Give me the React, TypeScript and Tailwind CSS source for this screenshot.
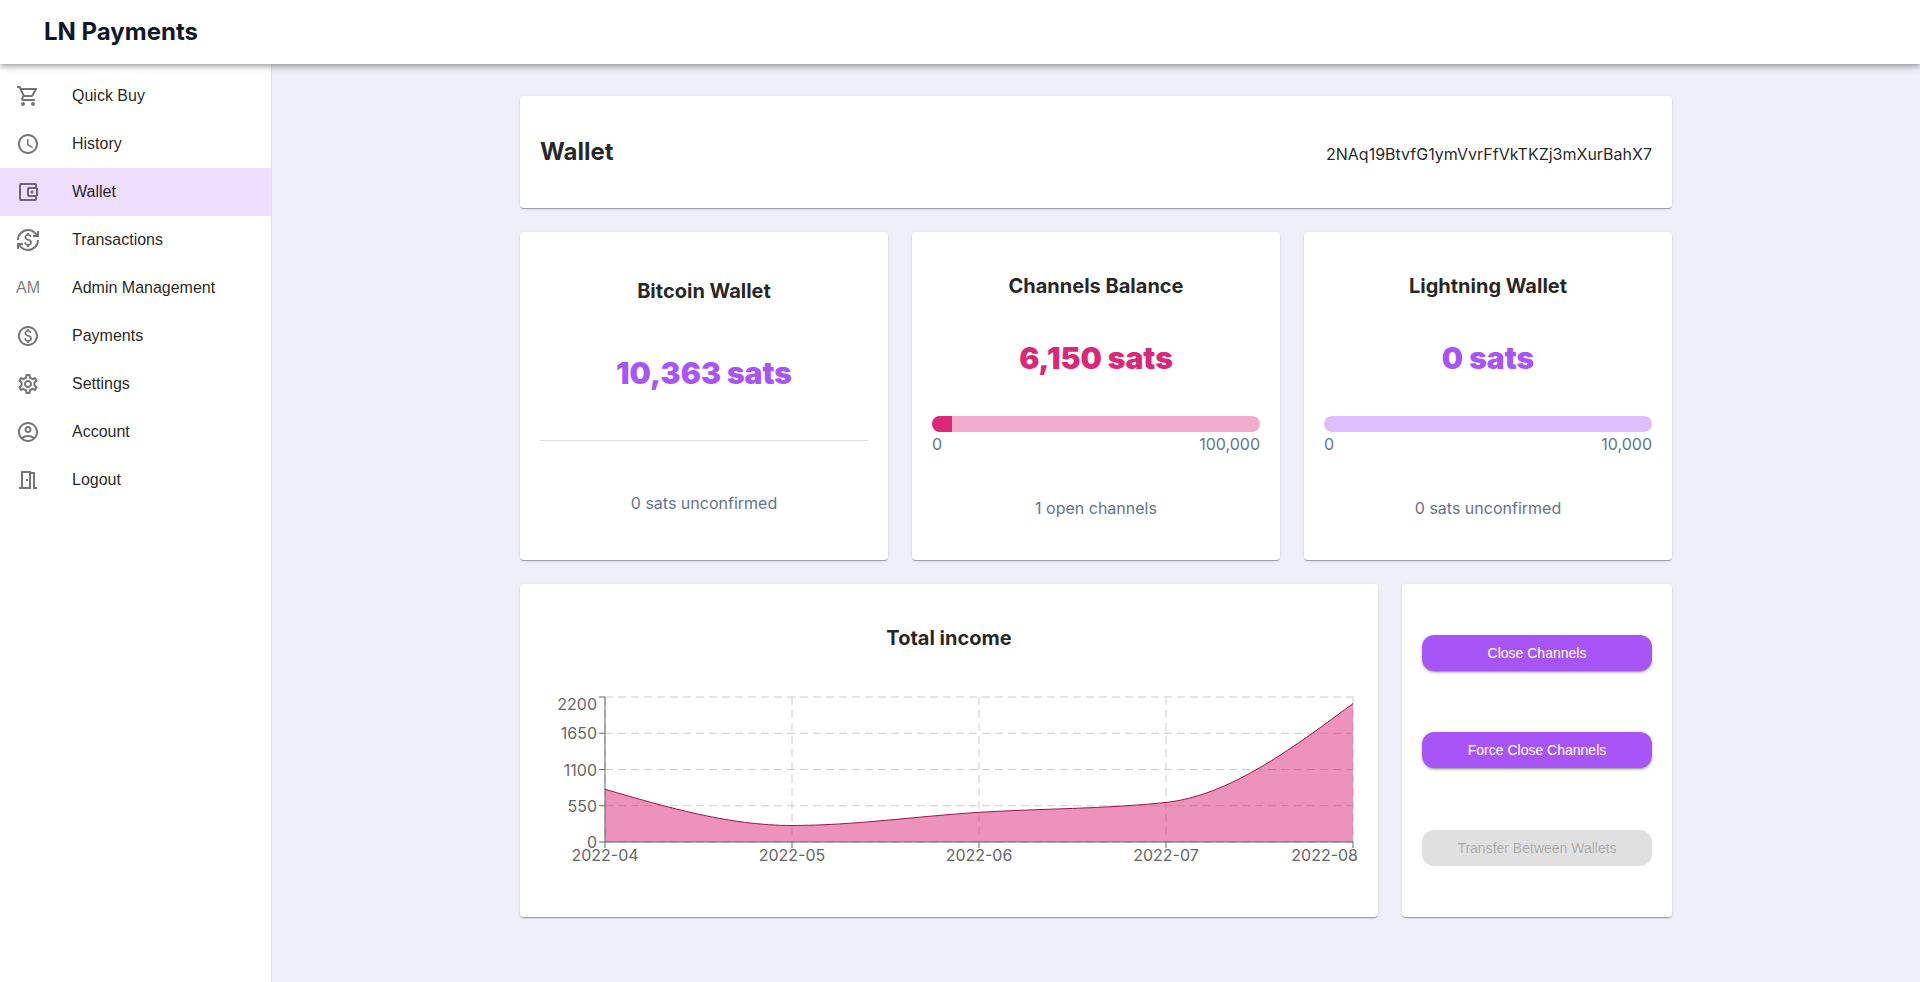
import { useLayoutEffect, useRef, useState } from "react";
import type { ReactNode } from "react";
import {
  MdAccessTime,
  MdCurrencyExchange,
  MdOutlineAccountBalanceWallet,
  MdOutlineAccountCircle,
  MdOutlineMeetingRoom,
  MdOutlinePaid,
  MdOutlineSettings,
  MdOutlineShoppingCart,
} from "react-icons/md";

type NavItem = { label: string; icon: ReactNode; active?: boolean };

const NAV_ITEMS: NavItem[] = [
  { label: "Quick Buy", icon: <MdOutlineShoppingCart size={24} /> },
  { label: "History", icon: <MdAccessTime size={24} /> },
  { label: "Wallet", icon: <MdOutlineAccountBalanceWallet size={24} />, active: true },
  { label: "Transactions", icon: <MdCurrencyExchange size={24} /> },
  { label: "Admin Management", icon: "AM" },
  { label: "Payments", icon: <MdOutlinePaid size={24} /> },
  { label: "Settings", icon: <MdOutlineSettings size={24} /> },
  { label: "Account", icon: <MdOutlineAccountCircle size={24} /> },
  { label: "Logout", icon: <MdOutlineMeetingRoom size={24} /> },
];

const INCOME = [
  { month: "2022-04", value: 800 },
  { month: "2022-05", value: 250 },
  { month: "2022-06", value: 450 },
  { month: "2022-07", value: 600 },
  { month: "2022-08", value: 2100 },
];

const Y_TICKS = [0, 550, 1100, 1650, 2200];

function Sidebar() {
  return (
    <nav
      aria-label="Main"
      className="w-68 shrink-0 border-r border-black/12 bg-white py-2 font-['Liberation_Sans',Arial,sans-serif]"
    >
      <ul>
        {NAV_ITEMS.map((item) => (
          <li key={item.label}>
            <a
              href="#"
              aria-current={item.active ? "page" : undefined}
              className={`flex h-12 items-center px-4 text-base text-black/87 ${
                item.active ? "bg-[#a855f7]/20" : "bg-white"
              }`}
            >
              <span className="w-14 shrink-0 text-black/54">{item.icon}</span>
              <span>{item.label}</span>
            </a>
          </li>
        ))}
      </ul>
    </nav>
  );
}

function Card({ className, children }: { className: string; children: ReactNode }) {
  return (
    <section
      className={`rounded bg-white px-5 shadow-[0_2px_1px_-1px_rgba(0,0,0,0.2),0_1px_1px_0_rgba(0,0,0,0.14),0_1px_3px_0_rgba(0,0,0,0.12)] ${className}`}
    >
      {children}
    </section>
  );
}

type BalanceCardProps = {
  title: string;
  amount: string;
  amountColor: string;
  note: string;
  children: ReactNode;
};

function BalanceCard({ title, amount, amountColor, note, children }: BalanceCardProps) {
  return (
    <Card className="flex min-h-82 flex-col justify-around py-5 text-center">
      <h2 className="text-xl font-bold">{title}</h2>
      <p className={`text-3xl font-black ${amountColor}`}>{amount}</p>
      {children}
      <p className="text-base text-[#64748b]">{note}</p>
    </Card>
  );
}

type CapacityBarProps = {
  label: string;
  value: number;
  max: number;
  track: string;
  fill: string;
};

function CapacityBar({ label, value, max, track, fill }: CapacityBarProps) {
  return (
    <div>
      <div
        role="progressbar"
        aria-label={label}
        aria-valuenow={value}
        aria-valuemin={0}
        aria-valuemax={max}
        className={`h-4 overflow-hidden rounded-full ${track}`}
      >
        <div className={`h-full ${fill}`} style={{ width: `${(value / max) * 100}%` }} />
      </div>
      <div className="flex justify-between text-base text-[#64748b]">
        <span>0</span>
        <span>{max.toLocaleString("en-US")}</span>
      </div>
    </div>
  );
}

type Point = { x: number; y: number };

// Monotone cubic interpolation, so the curve never overshoots the data.
function monotonePath(points: Point[]): string {
  const n = points.length;
  const slopes: number[] = [];
  for (let i = 0; i < n - 1; i++) {
    slopes.push((points[i + 1].y - points[i].y) / (points[i + 1].x - points[i].x));
  }
  const tangents: number[] = new Array(n).fill(0);
  for (let i = 1; i < n - 1; i++) {
    const h0 = points[i].x - points[i - 1].x;
    const h1 = points[i + 1].x - points[i].x;
    const p = (slopes[i - 1] * h1 + slopes[i] * h0) / (h0 + h1);
    tangents[i] =
      (Math.sign(slopes[i - 1]) + Math.sign(slopes[i])) *
      Math.min(Math.abs(slopes[i - 1]), Math.abs(slopes[i]), 0.5 * Math.abs(p));
  }
  tangents[0] = (3 * slopes[0] - tangents[1]) / 2;
  tangents[n - 1] = (3 * slopes[n - 2] - tangents[n - 2]) / 2;

  let d = `M${points[0].x},${points[0].y}`;
  for (let i = 0; i < n - 1; i++) {
    const a = points[i];
    const b = points[i + 1];
    const dx = (b.x - a.x) / 3;
    d += `C${a.x + dx},${a.y + dx * tangents[i]},${b.x - dx},${b.y - dx * tangents[i + 1]},${b.x},${b.y}`;
  }
  return d;
}

function IncomeChart() {
  const ref = useRef<HTMLDivElement>(null);
  const [width, setWidth] = useState(818);

  useLayoutEffect(() => {
    const node = ref.current;
    if (!node) return;
    const update = () => setWidth(node.clientWidth);
    update();
    const observer = new ResizeObserver(update);
    observer.observe(node);
    return () => observer.disconnect();
  }, []);

  const height = 185;
  const left = 65;
  const right = width - 5;
  const top = 5;
  const bottom = 150;
  const yOf = (value: number) => bottom - (value / 2200) * (bottom - top);
  const points = INCOME.map((d, i) => ({
    x: left + (i * (right - left)) / (INCOME.length - 1),
    y: yOf(d.value),
  }));
  const line = monotonePath(points);

  return (
    <div ref={ref} className="min-w-0">
      <svg
        width={width}
        height={height}
        role="img"
        aria-label="Total income per month"
        className="block text-base"
      >
        <g stroke="#ccc" strokeDasharray="8 5">
          {Y_TICKS.map((t) => (
            <line key={t} x1={left} x2={right} y1={yOf(t)} y2={yOf(t)} />
          ))}
          {points.map((p) => (
            <line key={p.x} x1={p.x} x2={p.x} y1={top} y2={bottom} />
          ))}
        </g>
        <g stroke="#666">
          <line x1={left} x2={right} y1={bottom} y2={bottom} />
          <line x1={left} x2={left} y1={top} y2={bottom} />
          {Y_TICKS.map((t) => (
            <line key={t} x1={left - 6} x2={left} y1={yOf(t)} y2={yOf(t)} />
          ))}
          {points.map((p) => (
            <line key={p.x} x1={p.x} x2={p.x} y1={bottom} y2={bottom + 6} />
          ))}
        </g>
        <path d={`${line}L${right},${bottom}L${left},${bottom}Z`} fill="#db2777" fillOpacity={0.5} />
        <path d={line} fill="none" stroke="#9d174d" />
        <g fill="#666">
          {Y_TICKS.map((t) => (
            <text key={t} x={left - 8} y={Math.max(yOf(t), 12) + 6} textAnchor="end">
              {t}
            </text>
          ))}
          {INCOME.map((d, i) => (
            <text
              key={d.month}
              x={i === INCOME.length - 1 ? width : points[i].x}
              y={bottom + 19}
              textAnchor={i === INCOME.length - 1 ? "end" : "middle"}
            >
              {d.month}
            </text>
          ))}
        </g>
      </svg>
    </div>
  );
}

function ActionButton({ disabled, children }: { disabled?: boolean; children: ReactNode }) {
  return (
    <button
      type="button"
      disabled={disabled}
      className="h-9 w-full rounded-xl bg-[#a855f7] font-['Liberation_Sans',Arial,sans-serif] text-sm text-white shadow-[0_3px_1px_-2px_rgba(0,0,0,0.2),0_2px_2px_0_rgba(0,0,0,0.14),0_1px_5px_0_rgba(0,0,0,0.12)] disabled:bg-black/12 disabled:text-black/26 disabled:shadow-none"
    >
      {children}
    </button>
  );
}

export default function App() {
  return (
    <div className="flex min-h-screen flex-col bg-[#efeffa] font-['Inter',sans-serif] text-black/87">
      <header className="relative z-10 flex h-16 items-center bg-white px-11 shadow-[0_2px_4px_-1px_rgba(0,0,0,0.2),0_4px_5px_0_rgba(0,0,0,0.14),0_1px_10px_0_rgba(0,0,0,0.12)]">
        <h1 className="text-2xl font-bold text-[#0f172a]">LN Payments</h1>
      </header>
      <div className="flex grow">
        <Sidebar />
        <main className="min-w-0 grow">
          <div className="mx-auto grid max-w-[1200px] grid-cols-12 gap-6 px-6 py-8">
            <Card className="col-span-12 flex items-baseline justify-between py-10">
              <h2 className="text-2xl font-bold">Wallet</h2>
              <p className="text-base">2NAq19BtvfG1ymVvrFfVkTKZj3mXurBahX7</p>
            </Card>

            <div className="col-span-12 grid grid-cols-3 gap-6">
              <BalanceCard
                title="Bitcoin Wallet"
                amount="10,363 sats"
                amountColor="text-[#a855f7]"
                note="0 sats unconfirmed"
              >
                <hr className="border-black/12" />
              </BalanceCard>
              <BalanceCard
                title="Channels Balance"
                amount="6,150 sats"
                amountColor="text-[#db2777]"
                note="1 open channels"
              >
                <CapacityBar
                  label="Channels balance"
                  value={6150}
                  max={100000}
                  track="bg-[#f1adcb]"
                  fill="bg-[#db2777]"
                />
              </BalanceCard>
              <BalanceCard
                title="Lightning Wallet"
                amount="0 sats"
                amountColor="text-[#a855f7]"
                note="0 sats unconfirmed"
              >
                <CapacityBar
                  label="Lightning balance"
                  value={0}
                  max={10000}
                  track="bg-[#debefc]"
                  fill="bg-[#a855f7]"
                />
              </BalanceCard>
            </div>

            <Card className="col-span-9 flex flex-col gap-10 py-10">
              <h2 className="text-center text-xl font-bold">Total income</h2>
              <IncomeChart />
            </Card>
            <Card className="col-span-3 flex flex-col justify-around py-5">
              <ActionButton>Close Channels</ActionButton>
              <ActionButton>Force Close Channels</ActionButton>
              <ActionButton disabled>Transfer Between Wallets</ActionButton>
            </Card>
          </div>
        </main>
      </div>
    </div>
  );
}
